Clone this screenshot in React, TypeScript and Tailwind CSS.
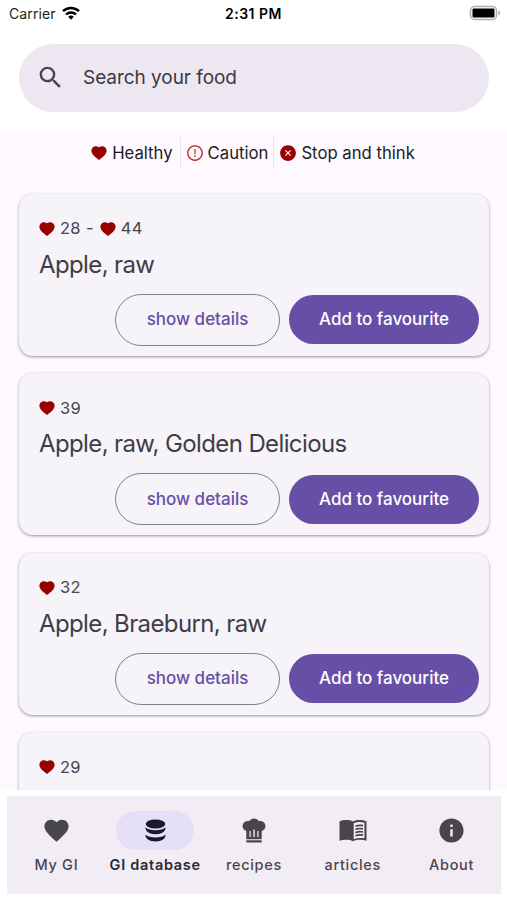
import React from 'react';
import { MdFavorite, MdInfo, MdSearch } from 'react-icons/md';
import { AiFillCloseCircle, AiFillHeart, AiOutlineExclamationCircle } from 'react-icons/ai';

interface Food {
  name?: string;
  values: number[];
}

const FOODS: Food[] = [
  { name: 'Apple, raw', values: [28, 44] },
  { name: 'Apple, raw, Golden Delicious', values: [39] },
  { name: 'Apple, Braeburn, raw', values: [32] },
  { values: [29] },
];

const DatabaseIcon = () => (
  <svg viewBox="0 0 21 23" className="h-[23px] w-[21px]" fill="currentColor">
    <ellipse cx="10.5" cy="5" rx="9.8" ry="4.600" />
    <path d="M.5 8.300c2 2.200 6 3 10 3s8-.8 10-3c.4 4-3.600 7-10 7s-10.400-3-10-7z" />
    <path d="M.5 15.500c2 2.200 6 3 10 3s8-.8 10-3c.4 4-3.600 7-10 7s-10.400-3-10-7z" />
  </svg>
);

const ChefHatIcon = () => (
  <svg viewBox="0 0 24 25" className="h-[25px] w-6" fill="currentColor">
    <path d="M12 .5a5.500 5.500 0 0 0-4.900 2.600A5.200 5.200 0 0 0 .500 8c0 2.600 1.700 4.300 3.800 4.900V19.500h3.200V13h1.200v6.500h2.600V11.500h1.400v8h2.600V13h1.200v6.500h3.200v-6.600c2.100-.6 3.800-2.300 3.800-4.900a5.200 5.200 0 0 0-6.600-4.900A5.500 5.500 0 0 0 12 .5z" />
    <path d="M4.300 19h15.400v2.300H4.300zM4.300 22.300h15.400v2.200H4.300z" />
  </svg>
);

const BookIcon = () => (
  <svg viewBox="0 0 28 23" className="h-[23px] w-7" fill="currentColor">
    <path d="M.5 2.500C4.500.600 10 .500 14 2.500c4-2 9.500-1.900 13.500 0v19.300c-4-1.500-9.500-1.500-13.500.4-4-1.900-9.500-1.900-13.500-.4z" />
    <path d="M14.700 4.200c3.400-1.500 7.200-1.500 10.700-.5v15.600c-3.500-.7-7.300-.5-10.700.9z" fill="#f2edf5" />
    <path
      d="M16.500 7.200c2.400-.9 5-1.100 7.500-.6M16.500 10.400c2.400-.9 5-1.100 7.500-.6M16.500 13.600c2.400-.9 5-1.100 7.500-.6M16.500 16.700c2.400-.9 5-1.100 7.500-.6"
      fill="none"
      stroke="currentColor"
      strokeWidth="1.700"
    />
  </svg>
);

const FoodCard: React.FC<{ food: Food }> = ({ food }) => (
  <article className="h-[162px] shrink-0 rounded-[14px] bg-[#f6f3f9] pt-[25px] shadow-[0_1px_3px_rgba(0,0,0,0.4)]">
    <div className="flex h-5 items-center pl-5 text-[16.5px] tracking-[0.3px] text-[#49464e]">
      {food.values.map((value, i) => (
        <React.Fragment key={value}>
          {i > 0 && <span className="ml-[5px] mr-1.5">-</span>}
          <AiFillHeart className="-ml-px mr-1 size-[18px] text-[#990000]" />
          <span>{value}</span>
        </React.Fragment>
      ))}
    </div>
    {food.name && (
      <>
        <h2 className="mt-2.5 pl-5 text-[24px] leading-8 tracking-[-0.62px] text-[#3f3d43]">{food.name}</h2>
        <div className="mt-[13px] flex items-center justify-end gap-[9px] pr-2.5">
          <button className="h-[52px] w-[165px] rounded-full border border-[#85818a] pt-px text-[17px] font-medium text-[#6750a4]">
            show details
          </button>
          <button className="h-[49px] w-[190px] rounded-full bg-[#674fa8] pt-px text-[17px] font-medium text-white">
            Add to favourite
          </button>
        </div>
      </>
    )}
  </article>
);

const TABS = [
  { label: 'My GI', icon: <MdFavorite className="size-[29px]" /> },
  { label: 'GI database', icon: <DatabaseIcon />, active: true },
  { label: 'recipes', icon: <ChefHatIcon /> },
  { label: 'articles', icon: <BookIcon /> },
  { label: 'About', icon: <MdInfo className="size-[29px]" /> },
];

export default function App() {
  return (
    <div className="flex h-[900px] w-[507px] flex-col overflow-hidden bg-white font-['Inter',sans-serif]">
      <header className="grid h-[27px] shrink-0 grid-cols-3 items-center pl-[9px] pr-1.5 text-[14px] text-black">
        <div className="flex items-center gap-1.5">
          <span className="tracking-[0.1px] text-[#222]">Carrier</span>
          <svg viewBox="0 0 18 14" className="-mt-0.5 h-3.5 w-[18px]" fill="none" stroke="black" strokeWidth="2.4">
            <path d="M1 5.200a11.500 11.500 0 0 1 16 0M4 8.500a7.200 7.200 0 0 1 10 0" />
            <path d="M6.200 10.800a4 4 0 0 1 5.600 0L9 13.700z" fill="black" stroke="none" />
          </svg>
        </div>
        <span className="-ml-[3px] text-center font-semibold tracking-[0.5px]">2:31 PM</span>
        <svg viewBox="0 0 32 16" className="-mt-0.5 h-4 w-8 justify-self-end">
          <rect x="1.500" y="1.500" width="26" height="13" rx="4" fill="white" stroke="#b0b0b0" strokeWidth="1.500" />
          <rect x="3.500" y="3.500" width="22" height="9" rx="1" fill="black" />
          <path d="M29.500 5.500c2.200.7 2.200 4.300 0 5z" fill="#aaa" />
        </svg>
      </header>

      <div className="ml-[19px] mr-[18px] mt-[17px] flex h-[68px] shrink-0 items-center rounded-full bg-[#ede7f2] pl-[17px]">
        <MdSearch className="-mt-0.5 size-[29px] text-[#49454f]" />
        <span className="ml-[18px] mt-px text-[19px] tracking-[-0.05px] text-[#3b3840]">Search your food</span>
      </div>

      <main className="mt-5 flex h-[658px] shrink-0 flex-col overflow-hidden bg-[#fdf9fe]">
        <div className="mt-[5px] flex h-8 shrink-0 items-center justify-center pr-0.5 text-[16.7px] text-[#1c1b1f]">
          <div className="flex items-center gap-1 pr-[7px]">
            <AiFillHeart className="size-[18px] text-[#990000]" />
            <span className="mt-px">Healthy</span>
          </div>
          <div className="flex h-8 items-center gap-1 border-x border-[#e8e3e9] px-[5px]">
            <AiOutlineExclamationCircle className="size-[18px] text-[#b3261e]" />
            <span className="mt-px">Caution</span>
          </div>
          <div className="flex items-center gap-1 pl-[5px]">
            <AiFillCloseCircle className="size-[18px] text-[#990000]" />
            <span className="mt-px">Stop and think</span>
          </div>
        </div>
        <div className="mt-[24.500px] flex flex-col gap-[17.500px] pl-[19px] pr-[18px]">
          {FOODS.map((food) => (
            <FoodCard key={food.values[0]} food={food} />
          ))}
        </div>
      </main>

      <nav className="ml-[7px] mr-1.5 mt-1.5 grid h-[98px] shrink-0 grid-cols-5 bg-[#f2edf5]">
        {TABS.map(({ label, icon, active }) => (
          <div key={label} className="flex min-w-0 flex-col items-center pt-[15px] text-[#49454f]">
            <div
              className={
                active
                  ? 'flex h-[39px] w-[78px] items-center justify-center rounded-full bg-[#e6dff8] text-[#1d192b]'
                  : 'flex h-[39px] w-[78px] items-center justify-center'
              }
            >
              {icon}
            </div>
            <span
              className={
                active
                  ? 'mt-[5px] whitespace-nowrap text-[14.500px] font-semibold leading-5 tracking-[0.7px] text-[#2b2930]'
                  : 'mt-[5px] whitespace-nowrap text-[14.500px] font-medium leading-5 tracking-[0.7px]'
              }
            >
              {label}
            </span>
          </div>
        ))}
      </nav>
    </div>
  );
}
